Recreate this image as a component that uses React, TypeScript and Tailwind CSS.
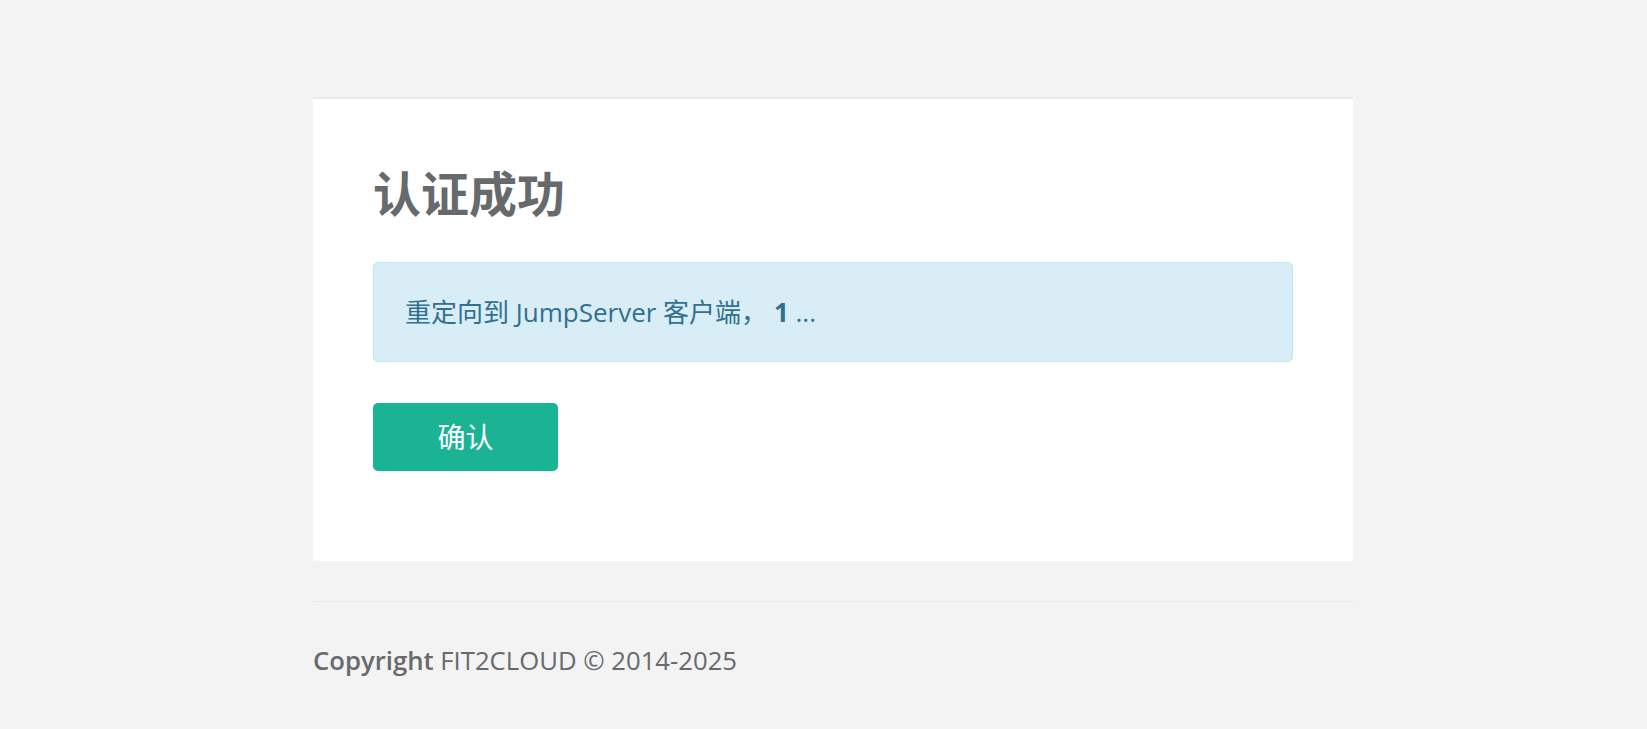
export default function App() {
  return (
    <div
      className="min-h-screen bg-[#f3f3f4] text-[#676a6c]"
      style={{ fontFamily: '"Open Sans", "Noto Sans CJK SC", sans-serif' }}
    >
      <div className="ml-[313px] w-[1040px] pt-[97px]">
        <div className="border-t-2 border-[#e7eaec] bg-white px-[60px] pt-[69px] pb-[90px]">
          <h2 className="text-[48px] font-bold leading-[52px]">认证成功</h2>
          <div className="mt-[42px] flex h-[100px] items-center rounded-[5px] border border-[#bce8f1] bg-[#d9edf7] px-[31px] text-[26px] text-[#31708f]">
            <span>
              重定向到 JumpServer 客户端， <b className="font-bold">1</b> ...
            </span>
          </div>
          <button className="mt-[41px] flex h-[68px] w-[185px] items-center justify-center rounded-[5px] bg-[#1ab394] text-[28px] text-white">
            确认
          </button>
        </div>
        <div className="mt-[40px] border-t border-[#e7eaec] pt-[40px] text-[25.7px]">
          <span className="font-semibold">Copyright</span> FIT2CLOUD © 2014-2025
        </div>
      </div>
    </div>
  );
}
